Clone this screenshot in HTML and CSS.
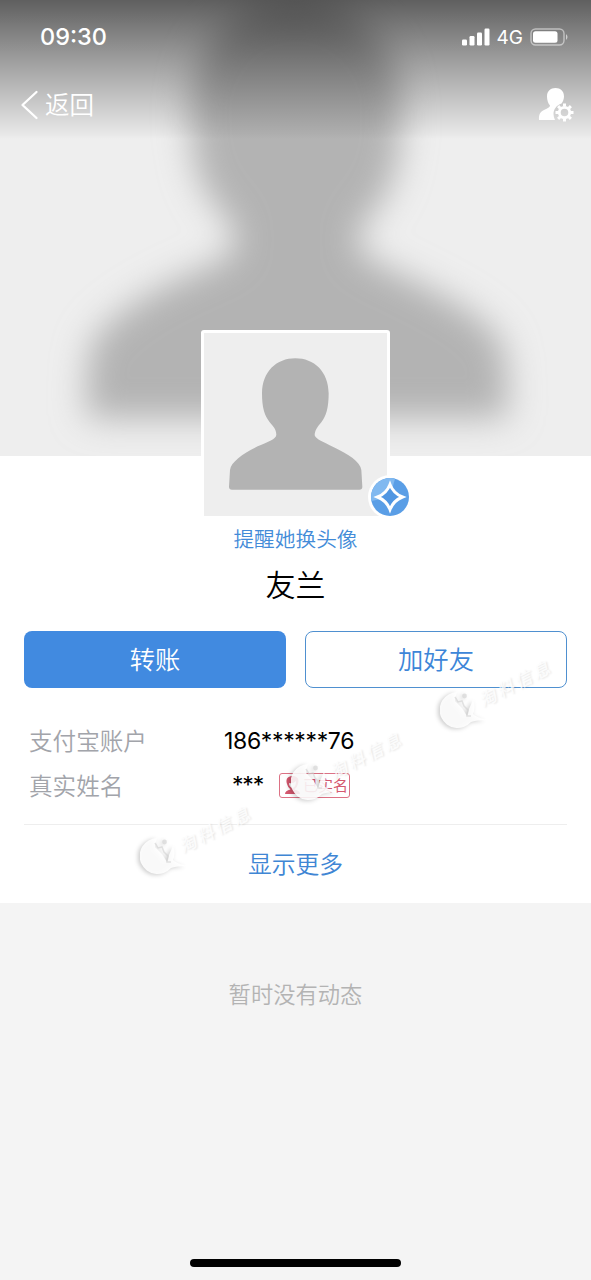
FILE: index.html
```html
<!DOCTYPE html>
<html lang="zh-CN">
<head>
<meta charset="utf-8">
<title>友兰</title>
<link rel="stylesheet" href="styles.css">
</head>
<body>
<svg width="0" height="0" class="defs">
  <defs>
    <path id="person" d="M316 115C372 115 416 155 416 220C416 262 409 288 394 307C382 321 374 332 374 346C378 358 400 366 430 381C475 403 511 425 514 450L517 500Q517 509 508 509L126 509Q117 509 117 500L120 450C123 425 160 400 203 379C235 364 258 358 259 344C258 325 250 320 238 305C223 286 216 262 216 220C216 155 260 115 316 115Z"/>
    <filter id="soft" x="-20%" y="-20%" width="140%" height="140%"><feGaussianBlur stdDeviation="17"/></filter>
    <g id="emblem">
      <path d="M17 3A18 18 0 1 0 31 33Q36 31 46 31Q36 28 33 25Q36 18 33 11L29 20L27 27L22 19L15 12Z" fill="#fff" fill-opacity=".88"/>
      <path d="M15 8L18 13L22 12L24 17L28 21L27 27L31 27" fill="none" stroke="#d0d0d0" stroke-opacity=".6" stroke-width="1.500"/>
      <circle cx="24.500" cy="7" r="2.400" fill="#d6d6d6" fill-opacity=".7"/>
    </g>
  </defs>
</svg>
<div class="screen">
  <header class="hero">
    <svg class="hero-bg" viewBox="0 0 591 456"><g filter="url(#soft)"><use href="#person" fill="#b3b3b3" transform="translate(-38 -120) scale(1.057)"/></g></svg>
    <div class="shade"></div>
    <div class="status">
      <span class="time">09:30</span>
      <div class="signals">
        <svg width="28" height="18" viewBox="0 0 28 18" fill="#fff"><rect x="0" y="11.5" width="5" height="6" rx="1.2"/><rect x="7.5" y="8" width="5" height="9.500" rx="1.2"/><rect x="15" y="4.500" width="5" height="13" rx="1.2"/><rect x="22.500" y="0.500" width="5" height="17" rx="1.2"/></svg>
        <span class="net">4G</span>
        <svg width="39" height="18" viewBox="0 0 39 18"><rect x="1" y="1" width="33" height="16" rx="4.500" fill="none" stroke="#fff" stroke-opacity=".5" stroke-width="1.400"/><rect x="3" y="3.200" width="24.500" height="11.600" rx="2.500" fill="#fff"/><path d="M36 6Q39 9 36 12Z" fill="#fff" fill-opacity=".6"/></svg>
      </div>
    </div>
    <nav class="nav">
      <div class="back">
        <svg width="19" height="30" viewBox="0 0 19 30"><path d="M16.500 2L2.500 15L16.500 28" fill="none" stroke="#fff" stroke-width="2.300" stroke-linecap="round" stroke-linejoin="round"/></svg>
        <span>返回</span>
      </div>
      <svg width="36" height="36" viewBox="0 0 36 36"><path d="M17.500 1C22.500 1 26 4 26 9.500C26 12 25 14.500 23.500 16.500C18.500 18 15.500 22.500 15.500 27Q15.600 30.500 17 33H1C0.700 27 2.500 24.800 6.500 22.800C9.500 21.300 12 20.500 12 18.500C10 16.500 9 13 9 9.500C9 4 12.500 1 17.500 1Z" fill="#fff"/><g transform="translate(26.500 25.500)"><circle r="5.200" fill="none" stroke="#fff" stroke-width="2.800"/><g stroke="#fff" stroke-width="3"><path d="M0-6V-9M0 6V9M-6 0H-9M6 0H9M4.300-4.300L6.400-6.400M-4.300 4.300L-6.400 6.400M4.300 4.300L6.400 6.400M-4.300-4.300L-6.400-6.400"/></g></g></svg>
    </nav>
  </header>
  <main class="profile">
    <div class="avatar">
      <svg class="face" viewBox="42 39 549 549"><use href="#person" fill="#b3b3b3"/></svg>
      <svg class="badge" viewBox="0 0 44 44"><circle cx="22" cy="22" r="22" fill="#fff"/><circle cx="22" cy="22" r="19" fill="#5a9ee6"/><path d="M22 22L3.500 26A19 19 0 0 1 27 3.700Z" fill="#81b9f0"/><path d="M22 9.500Q25.500 18.500 34.500 22Q25.500 25.500 22 34.500Q18.500 25.500 9.500 22Q18.500 18.500 22 9.500Z" fill="#5096e2" stroke="#fff" stroke-width="3"/></svg>
    </div>
    <a class="remind">提醒她换头像</a>
    <h1 class="name">友兰</h1>
    <div class="actions">
      <button class="btn primary">转账</button>
      <button class="btn outline">加好友</button>
    </div>
    <dl class="info">
      <dt>支付宝账户</dt><dd class="account">186******76</dd>
      <dt>真实姓名</dt>
      <dd class="real"><span class="stars">***</span>
        <span class="verified"><svg width="17" height="19" viewBox="0 0 17 19"><path d="M3 8C1 2 5 0 8.500 0S16 2 14 8Q13 12 10.500 13.500Q16 14.500 16 18H1Q1 14.500 6.500 13.500Q4 12 3 8Z" fill="#d5586f"/><path d="M5 7Q9 8 12 5Q12 11 8.500 12Q5 11 5 7Z" fill="#fff"/></svg>已实名</span>
      </dd>
    </dl>
    <a class="more">显示更多</a>
  </main>
  <section class="feed">暂时没有动态</section>
  <div class="home"></div>
  <div class="mark mark-a"><svg class="emblem" viewBox="0 0 48 42"><use href="#emblem"/></svg><b>淘料信息</b></div>
  <div class="mark mark-b"><svg class="emblem" viewBox="0 0 48 42"><use href="#emblem"/></svg><b>淘料信息</b></div>
  <div class="mark mark-c"><svg class="emblem" viewBox="0 0 48 42"><use href="#emblem"/></svg><b>淘料信息</b></div>
</div>
</body>
</html>
```
FILE: styles.css
```css
* { box-sizing: border-box; }
body { margin: 0; background: #f4f4f4; font-family: Inter, "Noto Sans CJK SC", sans-serif; font-weight: 350; }
svg { display: block; flex: none; }
.defs { position: absolute; }
.screen { position: relative; width: 591px; height: 1280px; overflow: hidden; display: flex; flex-direction: column; background: #f4f4f4; }
.hero { position: relative; height: 456px; flex: none; background: #eee; color: #fff; overflow: hidden; }
.hero-bg { position: absolute; inset: 0; width: 591px; height: 456px; }
.shade { position: absolute; inset: 0 0 auto; height: 139px; background: linear-gradient(rgba(0,0,0,.6), rgba(0,0,0,.31) 48%, rgba(0,0,0,.03) 96%, transparent); }
.status { position: relative; height: 73px; padding: 0 22px 0 40px; display: flex; align-items: center; justify-content: space-between; }
.time { font-size: 23.5px; font-weight: 500; }
.signals { display: flex; align-items: center; gap: 7px; }
.net { font-size: 19px; font-weight: 400; line-height: 20px; padding-top: 2px; }
.nav { position: relative; height: 63px; padding: 0 17px 0 20px; display: flex; align-items: center; justify-content: space-between; }
.back { display: flex; align-items: center; gap: 6px; font-size: 24.5px; line-height: 30px; }
.profile { position: relative; height: 447px; flex: none; background: #fff; display: flex; flex-direction: column; align-items: center; }
.avatar { position: relative; width: 189px; height: 189px; margin-top: -126px; border: 3px solid #fff; border-radius: 3px; background: #eee; flex: none; }
.face { width: 183px; height: 183px; }
.badge { position: absolute; width: 44px; height: 44px; right: -25px; bottom: -3px; }
.remind { margin-top: 6px; font-size: 20.7px; line-height: 30px; color: #438bd8; }
.name { margin: 9px 0 0; font-size: 30px; line-height: 42px; font-weight: 350; color: #000; }
.actions { display: grid; grid-template-columns: 1fr 1fr; gap: 19px; width: 543px; margin-top: 25px; }
.btn { height: 57px; padding: 0; border-radius: 8px; font: inherit; font-size: 25.3px; line-height: 57px; }
.primary { border: 0; background: #418ae0; color: #fff; }
.outline { border: 1px solid #4f90d0; background: #fff; color: #3d86d8; line-height: 56px; }
.info { width: 543px; height: 137px; margin: 0; padding: 31px 5px 0; border-bottom: 1px solid #eee; display: grid; grid-template-columns: 195px 1fr; grid-auto-rows: 45px; line-height: 45px; font-size: 23.6px; }
.info dt { color: #a2a4aa; }
.info dd { margin: 0; color: #000; font-weight: 400; font-size: 23px; }
.info .account { letter-spacing: -.35px; }
.stars { letter-spacing: -1.2px; line-height: 42px; width: 31px; margin-top: -3px; }
.info .real { display: flex; align-items: center; padding-left: 8px; gap: 16px; }
.verified { display: flex; align-items: center; gap: 2px; width: 71px; height: 25px; margin-top: -2px; padding-left: 4px; border: 1.500px solid #dc7285; border-radius: 3px; font-size: 15px; line-height: 22px; color: #d5586f; white-space: nowrap; }
.more { height: 78px; line-height: 80px; font-size: 23.8px; color: #3f86d4; }
.feed { padding-top: 76px; text-align: center; font-size: 22.3px; line-height: 32px; color: #b3b3b3; }
.home { width: 211px; height: 8px; margin: auto auto 13px; border-radius: 4px; background: #000; }
.mark { position: absolute; width: 130px; height: 44px; }
.emblem { width: 48px; height: 42px; filter: drop-shadow(-2px 1px 2px rgba(0,0,0,.22)); }
.mark b { position: absolute; left: 40px; top: 1px; transform: rotate(-27deg); transform-origin: 0 50%; font-size: 17px; line-height: 24px; font-weight: 500; font-style: italic; letter-spacing: 3px; white-space: nowrap; color: rgba(255,255,255,.8); text-shadow: 1px 1px 2px rgba(0,0,0,.1); }
.mark-a { left: 440px; top: 689px; }
.mark-b { left: 291px; top: 761px; }
.mark-c { left: 140px; top: 835px; }
```
